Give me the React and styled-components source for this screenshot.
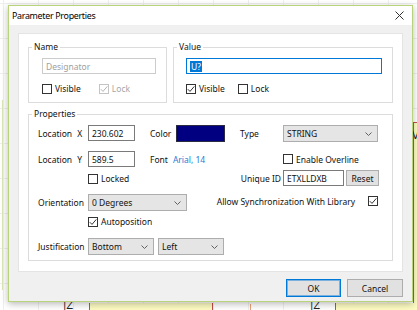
import React from 'react';
import styled, { createGlobalStyle } from 'styled-components';

const GlobalStyle = createGlobalStyle`
	html, body {
		margin: 0;
		padding: 0;
		background: #fff;
	}
	body {
		font-family: "Noto Sans", "DejaVu Sans", sans-serif;
		font-size: 8.5px;
		color: #1a1a1a;
	}
`;

const Desktop = styled.div`
	position: relative;
	width: 417px;
	height: 310px;
	box-sizing: border-box;
	overflow: hidden;
	padding: 5px 0 0 8px;
	background-color: #fff;
	background-image: linear-gradient(to right, #efefef 1px, transparent 1px),
		linear-gradient(to bottom, #efefef 1px, transparent 1px);
	background-size: 35px 35px;
	background-position: 3px 3px;
`;

/* schematic pieces peeking out behind the dialog */
const SymbolBody = styled.div`
	position: absolute;
	background: #fdfbc2;
	border-color: #c0504d;
	border-style: solid;
	border-width: ${(p) => p.$borders};
`;

const PinMark = styled.span`
	position: absolute;
	font-family: "DejaVu Sans", sans-serif;
	font-size: 10px;
	line-height: 10px;
	color: #222;
`;

const GuideLine = styled.div`
	position: absolute;
	width: 1px;
	background: ${(p) => p.$color};
`;

const Window = styled.div`
	position: relative;
	z-index: 1;
	width: 405px;
	height: 297px;
	box-sizing: border-box;
	display: flex;
	flex-direction: column;
	background: #f0f0f0;
	border: 1px solid #b9d27c;
	box-shadow: 0 2px 7px rgba(0, 0, 0, 0.28);
`;

const TitleBar = styled.div`
	height: 19px;
	display: flex;
	align-items: center;
	justify-content: space-between;
	padding: 0 8px 0 3px;
	background: #fff;
`;

const Title = styled.span`
	font-size: 8.9px;
	letter-spacing: -0.3px;
	color: #000;
`;

const Body = styled.div`
	flex: 1;
	display: flex;
	flex-direction: column;
	padding: 8px 9px 0 9px;
`;

const Panel = styled.div`
	height: 239px;
	box-sizing: border-box;
	display: flex;
	flex-direction: column;
	gap: 5px;
	padding: 7px 9px 0 9px;
	background: #fff;
	border: 1px solid #e4e4e4;
`;

const TopRow = styled.div`
	display: flex;
	gap: 6px;
`;

const Group = styled.fieldset`
	margin: 0;
	padding: 0;
	min-width: 0;
	width: ${(p) => p.$width}px;
	box-sizing: border-box;
	border: 1px solid #dcdcdc;
`;

const Legend = styled.legend`
	margin-left: 3px;
	padding: 0 2px;
	line-height: 12px;
	color: #111;
`;

const GroupInner = styled.div`
	display: flex;
	flex-direction: column;
	gap: 6px;
	padding: 5px 0 5px ${(p) => p.$left}px;
`;

const Field = styled.div`
	width: ${(p) => p.$width}px;
	height: 16px;
	flex-shrink: 0;
	box-sizing: border-box;
	display: flex;
	align-items: center;
	padding-left: 3px;
	background: #fff;
	border: 1px solid ${(p) => (p.$focused ? '#0078d7' : p.$disabled ? '#cccccc' : '#7a7a7a')};
	color: ${(p) => (p.$disabled ? '#a0a0a0' : '#111')};
	white-space: nowrap;
`;

const Selected = styled.span`
	background: #0078d7;
	color: #fff;
	padding: 0 1px;
	line-height: 11px;
`;

const CheckRow = styled.div`
	display: flex;
	align-items: center;
	gap: ${(p) => p.$gap}px;
`;

const CheckItem = styled.label`
	display: flex;
	align-items: center;
	gap: 3px;
	height: 17px;
	color: ${(p) => (p.$disabled ? '#a6a6a6' : '#111')};
	white-space: nowrap;
`;

const Box = styled.span`
	width: 10px;
	height: 10px;
	flex-shrink: 0;
	box-sizing: border-box;
	display: inline-flex;
	align-items: center;
	justify-content: center;
	background: #fff;
	border: 1px solid ${(p) => (p.$disabled ? '#c4c4c4' : '#333')};
`;

const PropGrid = styled.div`
	display: grid;
	grid-template-columns: 50px 47px 15px 26px 49px 15px 43px 95px;
	grid-template-rows: 26px 19px 24px 19px 25px 17px;
	align-items: start;
	padding: 5px 0 5px 9px;
`;

const Cell = styled.div`
	grid-row: ${(p) => p.$row};
	grid-column: ${(p) => p.$col};
	height: ${(p) => p.$h || 16}px;
	display: flex;
	align-items: center;
	justify-content: ${(p) => p.$justify || 'flex-start'};
	gap: ${(p) => p.$gap || 0}px;
	white-space: nowrap;
`;

const LabelText = styled.span`
	color: #111;
	padding-right: ${(p) => p.$pr || 0}px;
	word-spacing: ${(p) => p.$ws || 0}px;
`;

const Link = styled.span`
	color: #2b7bd6;
`;

const Swatch = styled.div`
	width: 49px;
	height: 17px;
	box-sizing: border-box;
	background: #000080;
	border: 1px solid #2a2a40;
`;

const Combo = styled.div`
	width: ${(p) => p.$width}px;
	height: 17px;
	flex-shrink: 0;
	box-sizing: border-box;
	display: flex;
	align-items: center;
	justify-content: space-between;
	padding: 0 5px 0 3px;
	background: #e5e5e5;
	border: 1px solid #adadad;
	color: #111;
`;

const Button = styled.button`
	width: ${(p) => p.$width}px;
	height: ${(p) => p.$h || 18}px;
	flex-shrink: 0;
	padding: 0;
	font-family: inherit;
	font-size: 8.5px;
	color: #111;
	background: #e1e1e1;
	border: 1px solid ${(p) => (p.$default ? '#0078d7' : '#adadad')};
	box-shadow: ${(p) => (p.$default ? 'inset 0 0 0 1px rgba(0, 120, 215, 0.45)' : 'none')};
	cursor: default;
`;

const ButtonRow = styled.div`
	display: flex;
	justify-content: flex-end;
	gap: 6px;
	margin-top: 7px;
`;

const Check = ({ checked, disabled }) => (
	<Box $disabled={disabled}>
		{checked && (
			<svg width="8" height="8" viewBox="0 0 8 8">
				<polyline
					points="0.8,4.2 3,6.4 7.3,1.4"
					fill="none"
					stroke={disabled ? '#b4b4b4' : '#333'}
					strokeWidth="1"
				/>
			</svg>
		)}
	</Box>
);

const CheckBox = ({ label, checked, disabled }) => (
	<CheckItem $disabled={disabled}>
		<Check checked={checked} disabled={disabled} />
		{label}
	</CheckItem>
);

const Chevron = () => (
	<svg width="7" height="4" viewBox="0 0 7 4">
		<polyline points="0.5,0.5 3.5,3.5 6.5,0.5" fill="none" stroke="#606060" strokeWidth="1" />
	</svg>
);

const Select = ({ value, width }) => (
	<Combo $width={width}>
		<span>{value}</span>
		<Chevron />
	</Combo>
);

const CloseIcon = () => (
	<svg width="9" height="9" viewBox="0 0 9 9">
		<path d="M0.5 0.5 L8.5 8.5 M8.5 0.5 L0.5 8.5" stroke="#333" strokeWidth="1" />
	</svg>
);

const App = () => {
	return (
		<>
			<GlobalStyle />
			<Desktop>
				<SymbolBody $borders="1px 0 0 1px" style={{ left: 413, top: 122, width: 20, height: 200 }} />
				<PinMark style={{ left: 412, top: 131 }}>V</PinMark>
				<SymbolBody $borders="0 1px 0 1px" style={{ left: 89, top: 303, width: 122, height: 20 }} />
				<SymbolBody $borders="0 0 0 1px" style={{ left: 335, top: 303, width: 100, height: 20 }} />
				<PinMark style={{ left: 63, top: 301 }}>|Z</PinMark>
				<PinMark style={{ left: 310, top: 301 }}>|Z</PinMark>
				<GuideLine $color="#e8a27a" style={{ left: 250, top: 304, height: 6 }} />
				<GuideLine $color="#dbe8b4" style={{ left: 2, top: 100, height: 190 }} />

				<Window>
					<TitleBar>
						<Title>Parameter Properties</Title>
						<CloseIcon />
					</TitleBar>
					<Body>
						<Panel>
							<TopRow>
								<Group $width={139}>
									<Legend>Name</Legend>
									<GroupInner $left={13}>
										<Field $width={114} $disabled>
											Designator
										</Field>
										<CheckRow $gap={18}>
											<CheckBox label="Visible" />
											<CheckBox label="Lock" checked disabled />
										</CheckRow>
									</GroupInner>
								</Group>
								<Group $width={220}>
									<Legend>Value</Legend>
									<GroupInner $left={12}>
										<Field $width={196} $focused>
											<Selected>U?</Selected>
										</Field>
										<CheckRow $gap={13}>
											<CheckBox label="Visible" checked />
											<CheckBox label="Lock" />
										</CheckRow>
									</GroupInner>
								</Group>
							</TopRow>

							<Group $width={365}>
								<Legend>Properties</Legend>
								<PropGrid>
									<Cell $row={1} $col="1">
										<LabelText $ws={3}>Location X</LabelText>
									</Cell>
									<Cell $row={1} $col="2">
										<Field $width={47}>230.602</Field>
									</Cell>
									<Cell $row={1} $col="4">
										<LabelText>Color</LabelText>
									</Cell>
									<Cell $row={1} $col="5" $h={17}>
										<Swatch />
									</Cell>
									<Cell $row={1} $col="7">
										<LabelText>Type</LabelText>
									</Cell>
									<Cell $row={1} $col="8" $h={17}>
										<Select value="STRING" width={95} />
									</Cell>

									<Cell $row={2} $col="1">
										<LabelText $ws={3}>Location Y</LabelText>
									</Cell>
									<Cell $row={2} $col="2">
										<Field $width={47}>589.5</Field>
									</Cell>
									<Cell $row={2} $col="4 / 6" $gap={5}>
										<LabelText>Font</LabelText>
										<Link>Arial, 14</Link>
									</Cell>
									<Cell $row={2} $col="8">
										<CheckBox label="Enable Overline" />
									</Cell>

									<Cell $row={3} $col="2 / 6" $h={17}>
										<CheckBox label="Locked" />
									</Cell>
									<Cell $row={3} $col="7" $justify="flex-end">
										<LabelText $pr={2}>Unique ID</LabelText>
									</Cell>
									<Cell $row={3} $col="8" $gap={2}>
										<Field $width={61}>ETXLLDXB</Field>
										<Button $width={33} $h={16}>
											Reset
										</Button>
									</Cell>

									<Cell $row={4} $col="1" $h={17}>
										<LabelText>Orientation</LabelText>
									</Cell>
									<Cell $row={4} $col="2 / 6" $h={17}>
										<Select value="0 Degrees" width={99} />
									</Cell>
									<Cell $row={4} $col="6 / 9" $h={14} $justify="flex-end" $gap={13}>
										<LabelText>Allow Synchronization With Library</LabelText>
										<Check checked />
									</Cell>

									<Cell $row={5} $col="2 / 6" $h={17}>
										<CheckBox label="Autoposition" checked />
									</Cell>

									<Cell $row={6} $col="1" $h={17}>
										<LabelText>Justification</LabelText>
									</Cell>
									<Cell $row={6} $col="2 / 6" $h={17} $gap={4}>
										<Select value="Bottom" width={66} />
										<Select value="Left" width={66} />
									</Cell>
								</PropGrid>
							</Group>
						</Panel>

						<ButtonRow>
							<Button $width={55} $default>
								OK
							</Button>
							<Button $width={56}>Cancel</Button>
						</ButtonRow>
					</Body>
				</Window>
			</Desktop>
		</>
	);
};

export default App;
